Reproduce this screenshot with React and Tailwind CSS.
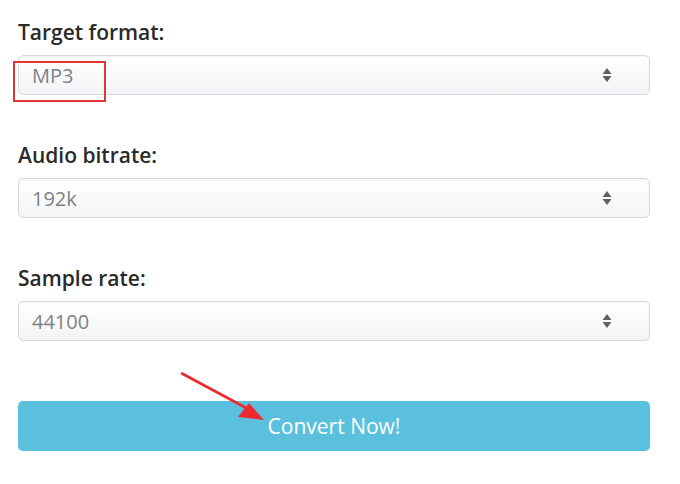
import React from "react";

function SelectBox({ value }) {
  return (
    <div className="relative flex h-[40px] w-full items-center rounded-[5px] border border-[#d3dbe1] bg-gradient-to-b from-[#ffffff] to-[#f3f4f5] pl-[13px] pr-[36px] pt-[2px] text-[20px] text-[#7c8288] shadow-[inset_0_1px_2px_rgba(0,0,0,0.05)]">
      <span className="leading-none">{value}</span>
      <svg className="absolute right-[37px] top-1/2 -translate-y-1/2" width="10" height="16" viewBox="0 0 10 16">
        <path d="M5 1 L9.5 7 L0.5 7 Z" fill="#5d6166" />
        <path d="M5 15 L9.5 9 L0.5 9 Z" fill="#5d6166" />
      </svg>
    </div>
  );
}

export default function App() {
  return (
    <div
      className="relative h-[484px] w-[680px] bg-white pl-[18px] pr-[30px] pt-[19px]"
      style={{ fontFamily: '"Open Sans", "Noto Sans", sans-serif' }}
    >
      <div className="flex flex-col">
        <label className="mb-[9px] text-[21px] font-semibold leading-[27px] text-[#2a2a2a]">Target format:</label>
        <SelectBox value="MP3" />
        <label className="mb-[9px] mt-[47px] text-[21px] font-semibold leading-[27px] text-[#2a2a2a]">Audio bitrate:</label>
        <SelectBox value="192k" />
        <label className="mb-[9px] mt-[47px] text-[21px] font-semibold leading-[27px] text-[#2a2a2a]">Sample rate:</label>
        <SelectBox value="44100" />
        <button className="mt-[60px] flex h-[50px] w-full items-center justify-center rounded-[5px] bg-[#5bc0de] pt-[2px] text-[21px] text-white">
          Convert Now!
        </button>
      </div>
      <div className="absolute left-[13px] top-[61px] h-[41px] w-[93px] border-2 border-[#e3343a]" />
      <svg className="absolute left-0 top-0" width="680" height="484" viewBox="0 0 680 484">
        <path d="M182 373.5 L250 410" stroke="#ee2a2f" strokeWidth="2.6" strokeLinecap="round" />
        <path d="M264 420 L238 417 L249 403 Z" fill="#ee2a2f" />
      </svg>
    </div>
  );
}
